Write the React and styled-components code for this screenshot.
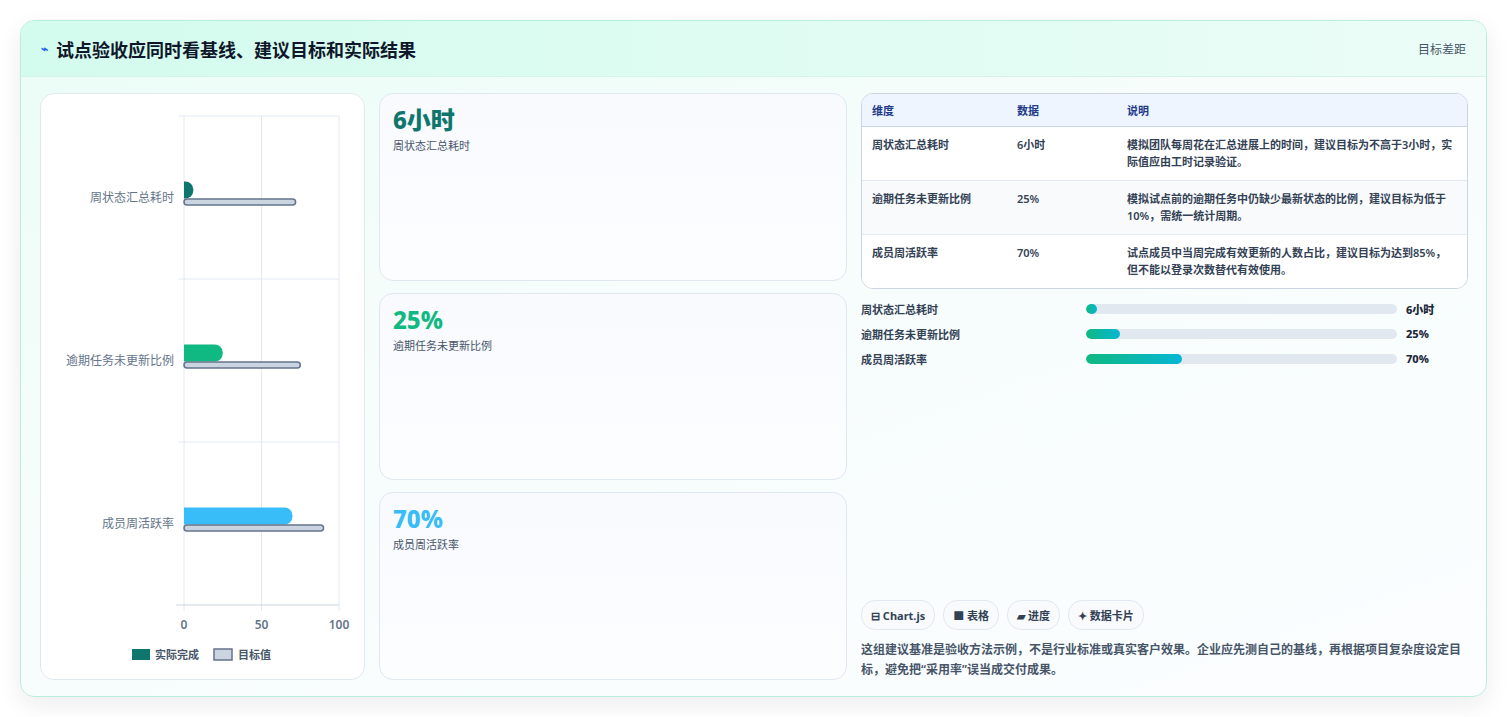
import React from "react";
import styled, { createGlobalStyle } from "styled-components";

const Global = createGlobalStyle`
  html,body{margin:0;padding:0;background:#fff;}
  body{font-family:"Noto Sans","Noto Sans CJK SC",sans-serif;}
`;
const Page = styled.div`padding:20px 20px 20px 20px;height:677px;box-sizing:content-box;`;
const Card = styled.div`
  border:1px solid #b9eedc;border-radius:14px;overflow:hidden;height:677px;box-sizing:border-box;
  background:linear-gradient(160deg,#eafdf6 0%,#f6fdfb 40%,#fbfdff 100%);
  box-shadow:0 8px 24px rgba(15,23,42,0.08);display:flex;flex-direction:column;
`;
const Header = styled.div`
  height:55px;flex:none;display:flex;align-items:center;justify-content:space-between;
  padding:0 20px;background:linear-gradient(90deg,#d3fbee,#e3fcf4 70%,#ecfdf7);
  border-bottom:1px solid #d5f3ea;
`;
const Title = styled.h1`margin:0;font-size:18px;font-weight:700;color:#0f172a;display:flex;align-items:center;gap:8px;`;
const Bolt = styled.span`color:#2563eb;font-size:12px;`;
const HeaderRight = styled.span`font-size:12px;color:#475569;`;
const Body = styled.div`flex:1;display:grid;grid-template-columns:325px 468px 607px;gap:13px;padding:16px 19px 17px 19px;column-gap:14px;min-height:0;`;
const Panel = styled.div`background:#fff;border:1px solid #e2e8f0;border-radius:14px;display:flex;flex-direction:column;align-items:center;`;
const Cards = styled.div`display:grid;grid-template-rows:1fr 1fr 1fr;gap:12px;`;
const Stat = styled.div`background:linear-gradient(180deg,#f8fafe,#fbfdff);border:1px solid #dfe7f1;border-radius:14px;padding:10px 13px;`;
const StatValue = styled.div`font-size:24px;font-weight:800;color:${p=>p.c};line-height:32px;`;
const StatLabel = styled.div`font-size:11px;color:#475569;margin-top:1px;`;
const Right = styled.div`display:flex;flex-direction:column;`;
const Table = styled.table`width:100%;border-collapse:separate;border-spacing:0;border:1px solid #cbd5e1;border-radius:12px;overflow:hidden;font-size:11px;color:#334155;background:#fff;`;
const Th = styled.th`text-align:left;font-weight:700;color:#1e3a8a;background:#eef5ff;height:32px;padding:0 10px;border-bottom:1px solid #cbd5e1;width:${p=>p.w||"auto"};`;
const Td = styled.td`padding:9px 10px 10px;vertical-align:top;line-height:17px;font-weight:600;border-top:${p=>p.first?"none":"1px solid #e2e8f0"};background:${p=>p.alt?"#f8fafc":"#fff"};`;
const Bars = styled.div`display:flex;flex-direction:column;gap:6px;margin-top:10px;`;
const BarRow = styled.div`display:grid;grid-template-columns:225px 311px 1fr;align-items:center;height:19px;font-size:11px;color:#334155;font-weight:600;`;
const Track = styled.div`height:10px;border-radius:5px;background:#e2e8f0;overflow:hidden;`;
const Fill = styled.div`height:100%;border-radius:5px;background:linear-gradient(90deg,#10b981,#06b6d4);`;
const BarVal = styled.span`padding-left:9px;font-weight:800;color:#1e293b;`;
const Spacer = styled.div`flex:1;`;
const Chips = styled.div`display:flex;gap:8px;margin-bottom:10px;`;
const Chip = styled.span`height:28px;padding:0 9px;border:1px solid #e2e8f0;border-radius:14px;background:#f8fafc;font-size:11px;font-weight:700;color:#334155;display:flex;align-items:center;gap:3px;`;
const Note = styled.p`margin:0;font-size:12px;line-height:20px;color:#475569;font-weight:600;`;

const cats = [
  { n: "周状态汇总耗时", a: 6, t: 72, c: "#0f766e" },
  { n: "逾期任务未更新比例", a: 25, t: 75, c: "#10b981" },
  { n: "成员周活跃率", a: 70, t: 90, c: "#38bdf8" },
];

function Chart() {
  const x0 = 143, w = 155, y0 = 22, band = 163;
  const sx = v => x0 + (v / 100) * w;
  return (
    <svg width="323" height="585" viewBox="0 0 323 585" style={{ fontFamily: "Noto Sans, Noto Sans CJK SC, sans-serif" }}>
      {[0, 50, 100].map(v => (
        <line key={v} x1={sx(v)} x2={sx(v)} y1={y0} y2={y0 + 3 * band + 6} stroke="#e2e8f0" />
      ))}
      {[1, 2].map(i => <line key={i} x1={x0 - 6} x2={x0 + w} y1={y0 + i * band} y2={y0 + i * band} stroke="#e2e8f0" />)}
      <line x1={x0 - 6} x2={x0 + w} y1={y0} y2={y0} stroke="#e2e8f0" />
      <line x1={x0 - 8} x2={x0 + w} y1={y0 + 3 * band} y2={y0 + 3 * band} stroke="#cbd5e1" />
      {cats.map((c, i) => {
        const cy = y0 + i * band + band / 2;
        const aw = sx(c.a) - x0;
        return (
          <g key={i}>
            <text x={x0 - 10} y={cy + 4} textAnchor="end" fontSize="12" fill="#64748b">{c.n}</text>
            <path d={`M${x0} ${cy - 16} H${x0 + aw - 8} a8 8 0 0 1 8 8 v1 a8 8 0 0 1 -8 8 H${x0} Z`} fill={c.c} />
            <rect x={x0} y={cy + 1.5} width={sx(c.t) - x0} height={6} rx={3} fill="#cbd5e1" stroke="#64748b" strokeWidth="1.5" />
          </g>
        );
      })}
      {[0, 50, 100].map(v => (
        <text key={v} x={sx(v)} y={535} textAnchor="middle" fontSize="12" fontWeight="600" fill="#64748b">{v}</text>
      ))}
      <rect x="91" y="555" width="18" height="11" fill="#0f766e" />
      <text x="114" y="565" fontSize="11" fontWeight="600" fill="#475569">实际完成</text>
      <rect x="173" y="555" width="18" height="11" fill="#cbd5e1" stroke="#64748b" strokeWidth="1.5" />
      <text x="197" y="565" fontSize="11" fontWeight="600" fill="#475569">目标值</text>
    </svg>
  );
}

const rows = [
  ["周状态汇总耗时", "6小时", "模拟团队每周花在汇总进展上的时间，建议目标为不高于3小时，实际值应由工时记录验证。"],
  ["逾期任务未更新比例", "25%", "模拟试点前的逾期任务中仍缺少最新状态的比例，建议目标为低于10%，需统一统计周期。"],
  ["成员周活跃率", "70%", "试点成员中当周完成有效更新的人数占比，建议目标为达到85%，但不能以登录次数替代有效使用。"],
];

export default function App() {
  return (
    <Page>
      <Global />
      <Card>
        <Header>
          <Title><Bolt>⌁</Bolt>试点验收应同时看基线、建议目标和实际结果</Title>
          <HeaderRight>目标差距</HeaderRight>
        </Header>
        <Body>
          <Panel><Chart /></Panel>
          <Cards>
            <Stat><StatValue c="#0f766e">6小时</StatValue><StatLabel>周状态汇总耗时</StatLabel></Stat>
            <Stat><StatValue c="#10b981">25%</StatValue><StatLabel>逾期任务未更新比例</StatLabel></Stat>
            <Stat><StatValue c="#38bdf8">70%</StatValue><StatLabel>成员周活跃率</StatLabel></Stat>
          </Cards>
          <Right>
            <Table>
              <thead><tr><Th w="125px">维度</Th><Th w="90px">数据</Th><Th>说明</Th></tr></thead>
              <tbody>
                {rows.map((r, i) => (
                  <tr key={i}>
                    <Td first={i === 0} alt={i === 1}>{r[0]}</Td>
                    <Td first={i === 0} alt={i === 1}>{r[1]}</Td>
                    <Td first={i === 0} alt={i === 1}>{r[2]}</Td>
                  </tr>
                ))}
              </tbody>
            </Table>
            <Bars>
              {[["周状态汇总耗时", 3.5, "6小时"], ["逾期任务未更新比例", 11, "25%"], ["成员周活跃率", 31, "70%"]].map(([n, p, v]) => (
                <BarRow key={n}><span>{n}</span><Track><Fill style={{ width: p + "%" }} /></Track><BarVal>{v}</BarVal></BarRow>
              ))}
            </Bars>
            <Spacer />
            <Chips>
              <Chip>⊟ Chart.js</Chip><Chip>■ 表格</Chip><Chip>▰ 进度</Chip><Chip>✦ 数据卡片</Chip>
            </Chips>
            <Note>这组建议基准是验收方法示例，不是行业标准或真实客户效果。企业应先测自己的基线，再根据项目复杂度设定目标，避免把“采用率”误当成交付成果。</Note>
          </Right>
        </Body>
      </Card>
    </Page>
  );
}
